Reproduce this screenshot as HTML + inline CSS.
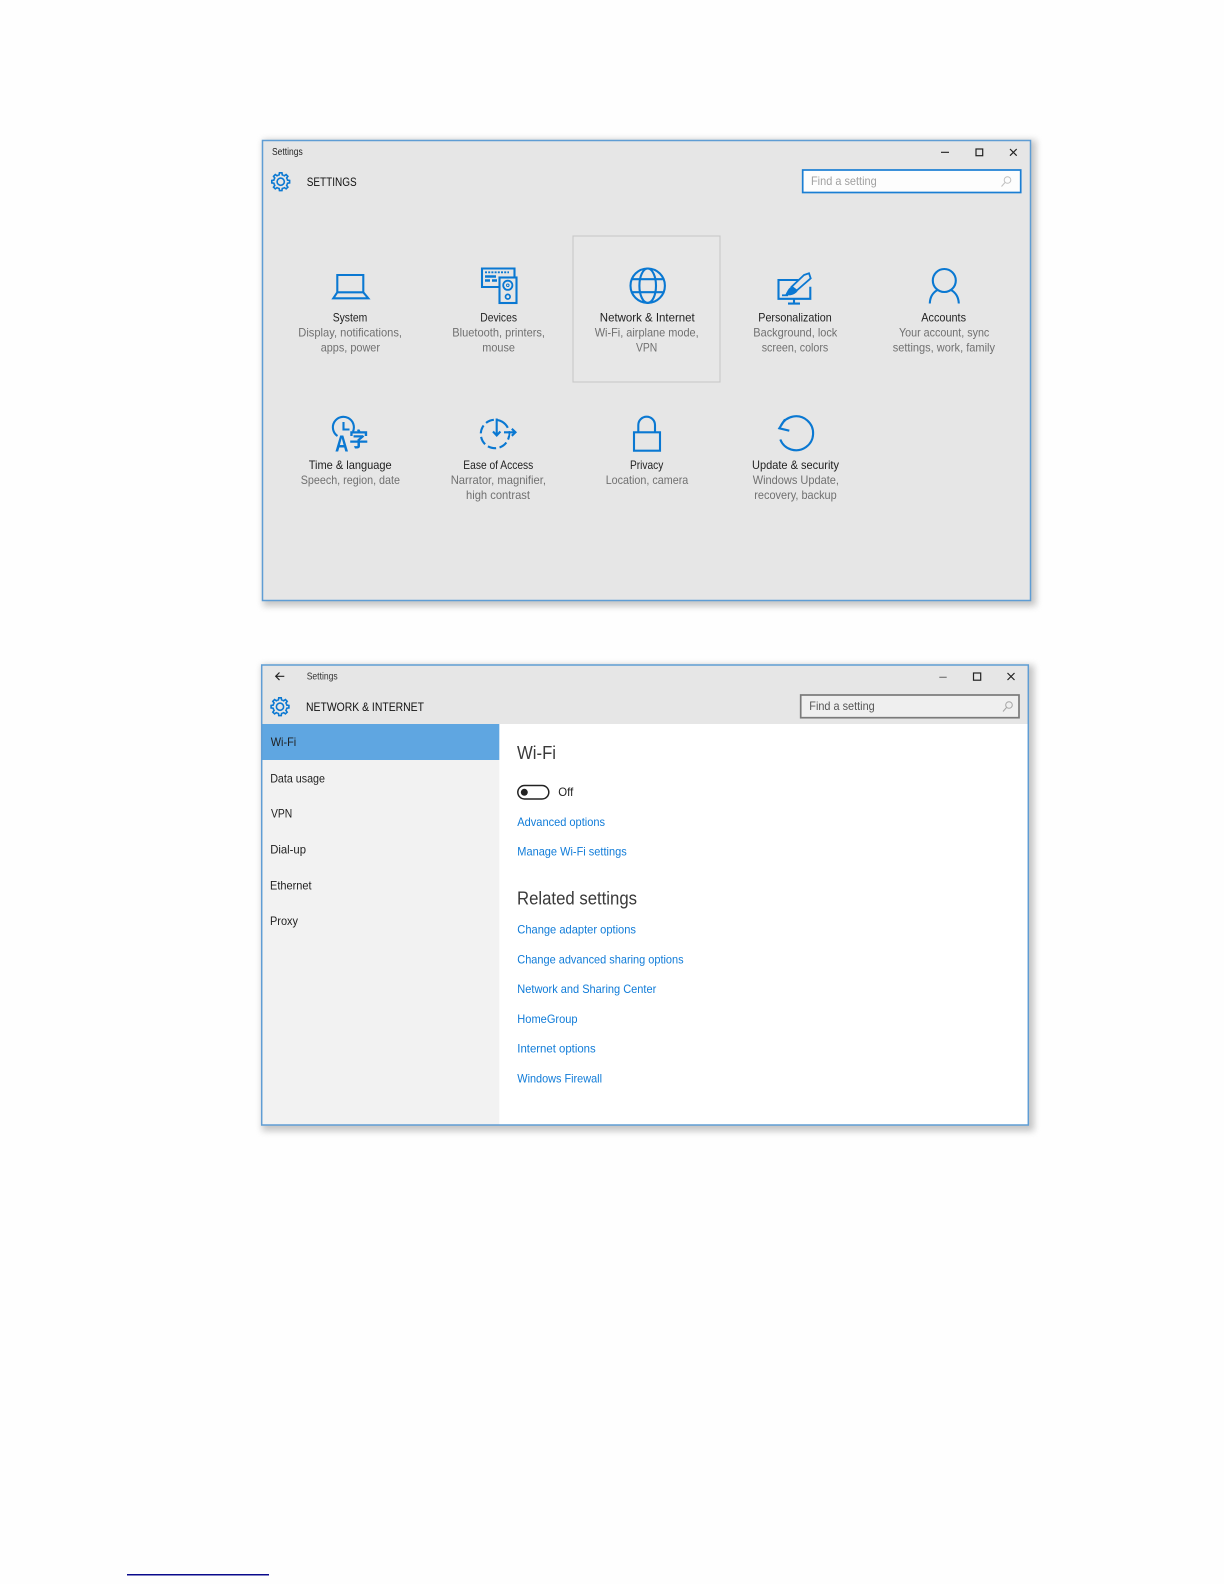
<!DOCTYPE html>
<html lang="en"><head><meta charset="utf-8"><title>Settings</title>
<style>
html,body{margin:0;padding:0;background:#fff}
svg{display:block;filter:blur(.3px)}
text{font-family:"Liberation Sans","Noto Sans CJK SC",sans-serif;font-size:12px;white-space:pre}
.n{fill:#1f1f1f}.s{fill:#707070}.l{fill:#0f7bd8}
.i{fill:none;stroke:#0a78d2;stroke-width:2.1}
.c{fill:none;stroke:#222;stroke-width:1.2}
</style></head><body>
<svg xmlns="http://www.w3.org/2000/svg" width="1224" height="1584" viewBox="0 0 1224 1584">
<defs>
<filter id="sh" x="-5%" y="-5%" width="110%" height="110%"><feGaussianBlur stdDeviation="3.5"/></filter>
<g id="t"><path d="M-2.68-6.47L-1.57-6.82L-1.25-8.91H1.25L1.57-6.82L2.68-6.47"/></g>
<g id="gear" fill="none" stroke="#0a78d2" stroke-width="1.6">
<circle r="3.6"/>
<use href="#t"/><use href="#t" transform="rotate(45)"/><use href="#t" transform="rotate(90)"/><use href="#t" transform="rotate(135)"/><use href="#t" transform="rotate(180)"/><use href="#t" transform="rotate(225)"/><use href="#t" transform="rotate(270)"/><use href="#t" transform="rotate(315)"/>
</g>
</defs>
<rect width="1224" height="1584" fill="#fefefe"/>

<!-- Window 1 -->
<rect x="263" y="140" width="773" height="466" fill="#8c8c8c" opacity=".5" filter="url(#sh)"/>
<rect x="262.5" y="140.5" width="768" height="460" fill="#e6e6e6" stroke="#5f9dd4" stroke-width="1.5"/>
<text class="n" x="272" y="155" style="font-size:10px" textLength="30.7" lengthAdjust="spacingAndGlyphs">Settings</text>
<use href="#gear" x="280.7" y="181.7"/>
<text x="306.7" y="186" fill="#111" textLength="50" lengthAdjust="spacingAndGlyphs">SETTINGS</text>
<path class="c" d="M941 152.3h8M1010 149l6.7 6.7M1016.7 149l-6.7 6.7"/>
<rect class="c" x="976" y="149" width="6.7" height="6.7"/>
<rect x="802.7" y="170" width="218" height="22.5" fill="#fdfdfd" stroke="#1a7ed3" stroke-width="1.7"/>
<text x="811" y="185" fill="#a0a0a0" textLength="65.7" lengthAdjust="spacingAndGlyphs">Find a setting</text>
<g fill="none" stroke="#c0c0c0" stroke-width="1"><circle cx="1007.5" cy="180" r="3.3"/><path d="M1005 182.5l-3.5 4"/></g>

<rect x="573" y="236" width="147" height="146" fill="#e7e7e7" stroke="#c8c8c8" stroke-width="1.1"/>

<!-- icons row 1 -->
<g class="i">
<path d="M337.3 292.3V275H363.3V292.3M337.3 292.3L333.3 298.3H368.3L363.3 292.3Z"/>
<path d="M499 287H482V268.5H514.5V277.5"/>
<rect x="499.5" y="277.5" width="17" height="25.5" fill="#e6e6e6"/>
<circle cx="507.8" cy="285.3" r="4.6" stroke-width="1.8"/><circle cx="507.8" cy="285.3" r="1.3" stroke-width="1"/>
<circle cx="507.8" cy="296.7" r="2.3" stroke-width="1.7"/>
<path d="M485 272.3h24" stroke-dasharray="2 1.2" stroke-width="1.8"/>
<path d="M485 276.5h11M485 280.5h5M492 280.5h5" stroke-width="2.6"/>
<circle cx="647.7" cy="285.7" r="17.2"/>
<ellipse cx="647.7" cy="285.7" rx="8.3" ry="17.2"/>
<path d="M632.5 279.2h30.4M632.5 292.2h30.4"/>
<path d="M798.3 280H778.5V298.8H810.3V286.7M794 299v4M788 303.6h12"/>
<path d="M804 275L809 273.3L810.7 278.3L796.7 290.5L791.7 286.7Z" stroke-width="1.8"/>
<path d="M792 287C789 288 788 291 786 294.500C790 295.500 795 294 797 291Z" fill="#0a78d2" stroke-width="1"/>
<path d="M782 295.300h6" stroke-width="1.800"/>
<circle cx="944.300" cy="280.500" r="11.500"/>
<path d="M929.800 303.500C930 297 933 292.500 937.500 290M958.800 303.500C958.500 297 955.500 292.500 951 290"/>
</g>
<g class="n">
<text x="332.700" y="321.700" textLength="34.600" lengthAdjust="spacingAndGlyphs">System</text>
<text x="480.300" y="321.700" textLength="36.700" lengthAdjust="spacingAndGlyphs">Devices</text>
<text x="599.800" y="321.700" textLength="94.900" lengthAdjust="spacingAndGlyphs">Network &amp; Internet</text>
<text x="758.300" y="321.700" textLength="73.400" lengthAdjust="spacingAndGlyphs">Personalization</text>
<text x="921.300" y="321.700" textLength="44.700" lengthAdjust="spacingAndGlyphs">Accounts</text>
<text x="308.700" y="469" textLength="83" lengthAdjust="spacingAndGlyphs">Time &amp; language</text>
<text x="463.300" y="469" textLength="70" lengthAdjust="spacingAndGlyphs">Ease of Access</text>
<text x="630" y="469" textLength="33.300" lengthAdjust="spacingAndGlyphs">Privacy</text>
<text x="752" y="469" textLength="87" lengthAdjust="spacingAndGlyphs">Update &amp; security</text>
</g>
<g class="s">
<text x="298.300" y="336.700" textLength="103.700" lengthAdjust="spacingAndGlyphs">Display, notifications,</text>
<text x="320.700" y="351.700" textLength="59.300" lengthAdjust="spacingAndGlyphs">apps, power</text>
<text x="452.300" y="336.700" textLength="92.700" lengthAdjust="spacingAndGlyphs">Bluetooth, printers,</text>
<text x="482.300" y="351.700" textLength="32.700" lengthAdjust="spacingAndGlyphs">mouse</text>
<text x="594.700" y="336.700" textLength="104" lengthAdjust="spacingAndGlyphs">Wi-Fi, airplane mode,</text>
<text x="636" y="351.700" textLength="21.300" lengthAdjust="spacingAndGlyphs">VPN</text>
<text x="753.300" y="336.700" textLength="84" lengthAdjust="spacingAndGlyphs">Background, lock</text>
<text x="761.700" y="351.700" textLength="66.600" lengthAdjust="spacingAndGlyphs">screen, colors</text>
<text x="899" y="336.700" textLength="90.300" lengthAdjust="spacingAndGlyphs">Your account, sync</text>
<text x="892.700" y="351.700" textLength="102.300" lengthAdjust="spacingAndGlyphs">settings, work, family</text>
<text x="300.700" y="484" textLength="99.300" lengthAdjust="spacingAndGlyphs">Speech, region, date</text>
<text x="450.700" y="484" textLength="95.300" lengthAdjust="spacingAndGlyphs">Narrator, magnifier,</text>
<text x="466" y="499" textLength="64" lengthAdjust="spacingAndGlyphs">high contrast</text>
<text x="605.700" y="484" textLength="82.600" lengthAdjust="spacingAndGlyphs">Location, camera</text>
<text x="752.700" y="484" textLength="86.300" lengthAdjust="spacingAndGlyphs">Windows Update,</text>
<text x="754.300" y="499" textLength="82.400" lengthAdjust="spacingAndGlyphs">recovery, backup</text>
</g>

<!-- icons row 2 -->
<g class="i">
<path d="M337.500 436A10.500 10.500 0 1 1 353 431.500"/>
<path d="M343.500 422V429.500H349.500"/>
<circle cx="495" cy="434" r="14.200" stroke-dasharray="8.500 3.500" transform="rotate(-60 495 434)"/>
<path d="M505 426V432.300M497 418.500V435" stroke="#e6e6e6" stroke-width="0"/>
<path d="M496.700 418.500V435M493 431.500L496.700 435.500L500.400 431.500"/>
<rect x="502.500" y="429" width="6" height="6.600" fill="#e6e6e6" stroke="none"/>
<path d="M504 432.300H515M511.800 428.800L515.500 432.300L511.800 435.800"/>
<rect x="634" y="432.300" width="26" height="18.400"/>
<path d="M638.300 432V425a8.350 8.350 0 0 1 16.700 0V432"/>
<path d="M781 425.500A17 17 0 1 1 780.300 439.500"/>
<path d="M785 419.300L779.300 428.300L789.300 430.700"/>
</g>
<text x="335" y="451.700" fill="#0a78d2" textLength="13.500" lengthAdjust="spacingAndGlyphs" style="font-size:23px;font-weight:bold">A</text>
<text x="349" y="446.500" fill="#0a78d2" textLength="19.500" lengthAdjust="spacingAndGlyphs" style="font-size:20px;font-weight:bold">字</text>

<!-- Window 2 -->
<rect x="262" y="665" width="772" height="466" fill="#8c8c8c" opacity=".5" filter="url(#sh)"/>
<rect x="261.700" y="665" width="766.600" height="460" fill="#fff"/>
<rect x="261.700" y="665" width="766.600" height="59" fill="#e6e6e6"/>
<rect x="261.700" y="724" width="237.600" height="401" fill="#f2f2f2"/>
<rect x="261.700" y="724" width="237.600" height="36" fill="#5fa6e1"/>
<rect x="261.700" y="665" width="766.600" height="460" fill="none" stroke="#5f9dd4" stroke-width="1.500"/>
<path d="M276 676.300h8.300M279.500 672.500L275.700 676.300L279.500 680.100" fill="none" stroke="#222" stroke-width="1.200"/>
<text x="306.700" y="679.300" fill="#333" textLength="31" lengthAdjust="spacingAndGlyphs" style="font-size:10px">Settings</text>
<use href="#gear" x="280" y="706.700"/>
<text x="306" y="711" fill="#111" textLength="118" lengthAdjust="spacingAndGlyphs">NETWORK &amp; INTERNET</text>
<path d="M939.300 677.300h7.400" fill="none" stroke="#777" stroke-width="1.200"/>
<rect class="c" x="973.500" y="673" width="7.200" height="7.200"/>
<path class="c" d="M1007.500 673l7 7M1014.500 673l-7 7"/>
<rect x="800.700" y="695" width="218.300" height="22.700" fill="#efefef" stroke="#7a7a7a" stroke-width="1.700"/>
<text x="809.300" y="710" fill="#555" textLength="65.400" lengthAdjust="spacingAndGlyphs">Find a setting</text>
<g fill="none" stroke="#a5a5a5" stroke-width="1"><circle cx="1009" cy="705" r="3.300"/><path d="M1006.500 707.500l-3.500 4"/></g>

<g fill="#1f1f1f">
<text x="270.700" y="746" textLength="25.500" lengthAdjust="spacingAndGlyphs">Wi-Fi</text>
<text x="270.200" y="782.700" textLength="54.800" lengthAdjust="spacingAndGlyphs">Data usage</text>
<text x="271" y="817.700" textLength="21.300" lengthAdjust="spacingAndGlyphs">VPN</text>
<text x="270.200" y="853.300" textLength="35.800" lengthAdjust="spacingAndGlyphs">Dial-up</text>
<text x="270" y="889.600" textLength="41.500" lengthAdjust="spacingAndGlyphs">Ethernet</text>
<text x="270" y="925" textLength="28" lengthAdjust="spacingAndGlyphs">Proxy</text>
</g>
<text x="517" y="759" fill="#3a3a3a" textLength="39" lengthAdjust="spacingAndGlyphs" style="font-size:18px">Wi-Fi</text>
<rect x="517.800" y="785.500" width="31" height="13.500" rx="6.750" fill="none" stroke="#222" stroke-width="1.500"/>
<circle cx="524.300" cy="792.300" r="3.500" fill="#222"/>
<text x="558.300" y="796" fill="#222" textLength="15" lengthAdjust="spacingAndGlyphs">Off</text>
<text x="517" y="904.700" fill="#3a3a3a" textLength="120" lengthAdjust="spacingAndGlyphs" style="font-size:18px">Related settings</text>
<g class="l">
<text x="517.300" y="826" textLength="87.700" lengthAdjust="spacingAndGlyphs">Advanced options</text>
<text x="517.300" y="855.700" textLength="109.400" lengthAdjust="spacingAndGlyphs">Manage Wi-Fi settings</text>
<text x="517.300" y="933.300" textLength="118.700" lengthAdjust="spacingAndGlyphs">Change adapter options</text>
<text x="517.300" y="963.300" textLength="166.300" lengthAdjust="spacingAndGlyphs">Change advanced sharing options</text>
<text x="517.300" y="993.200" textLength="139" lengthAdjust="spacingAndGlyphs">Network and Sharing Center</text>
<text x="517.300" y="1022.900" textLength="60.300" lengthAdjust="spacingAndGlyphs">HomeGroup</text>
<text x="517.300" y="1052.600" textLength="78.400" lengthAdjust="spacingAndGlyphs">Internet options</text>
<text x="517.300" y="1082.300" textLength="84.700" lengthAdjust="spacingAndGlyphs">Windows Firewall</text>
</g>
<rect x="127" y="1574" width="142" height="1.500" fill="#0a0a8c"/>
</svg>
</body></html>
